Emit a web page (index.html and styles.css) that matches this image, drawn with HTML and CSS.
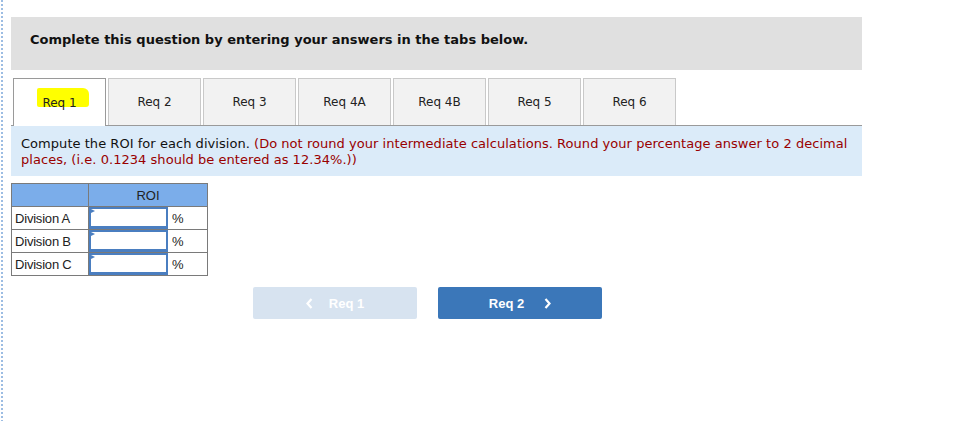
FILE: index.html
```html
<!DOCTYPE html>
<html>
<head>
<meta charset="utf-8">
<link rel="stylesheet" href="styles.css">
</head>
<body>
<div class="page">
  <div class="rail"></div>
  <div class="main">
    <div class="header">Complete this question by entering your answers in the tabs below.</div>
    <div class="tabs">
      <div class="tab active"><span class="hl">Req 1</span></div>
      <div class="tab">Req 2</div>
      <div class="tab">Req 3</div>
      <div class="tab">Req 4A</div>
      <div class="tab">Req 4B</div>
      <div class="tab">Req 5</div>
      <div class="tab">Req 6</div>
    </div>
    <div class="instr">Compute the ROI for each division. <span class="red">(Do not round your intermediate calculations. Round your percentage answer to 2 decimal places, (i.e. 0.1234 should be entered as 12.34%.))</span></div>
    <table class="grid">
      <tr class="head"><th class="c1"></th><th colspan="2">ROI</th></tr>
      <tr><td class="c1">Division A</td><td class="inp"><div class="box"></div></td><td class="pct">%</td></tr>
      <tr><td class="c1">Division B</td><td class="inp"><div class="box"></div></td><td class="pct">%</td></tr>
      <tr><td class="c1">Division C</td><td class="inp"><div class="box"></div></td><td class="pct">%</td></tr>
    </table>
    <div class="nav">
      <div class="btn prev"><svg class="chev" width="7" height="11" viewBox="0 0 7 11"><path d="M5.5 1 L1.5 5.5 L5.5 10" fill="none" stroke="#fff" stroke-width="2.2"/></svg><span>Req 1</span></div>
      <div class="btn next"><span>Req 2</span><svg class="chev" width="7" height="11" viewBox="0 0 7 11"><path d="M1.5 1 L5.5 5.5 L1.5 10" fill="none" stroke="#fff" stroke-width="2.2"/></svg></div>
    </div>
  </div>
</div>
</body>
</html>
```
FILE: styles.css
```css
html, body { margin: 0; padding: 0; background: #fff; }
.page { display: flex; height: 421px; overflow: hidden; }
.rail {
  width: 2px; margin-left: 1px; height: 421px; flex: none;
  background: repeating-linear-gradient(to bottom, #9dbde3 0, #9dbde3 2px, transparent 2px, transparent 4px);
}
.main { margin-left: 8px; width: 851px; }
.header {
  margin-top: 17px; height: 53px; box-sizing: border-box;
  background: #e0e0e0; padding: 15px 0 0 19px;
  font: bold 13px/16px "DejaVu Sans", Verdana, sans-serif; color: #111;
}
.tabs {
  margin-top: 8px; display: flex; gap: 2px; padding-left: 2px;
  border-bottom: 1px solid #9a9a9a; height: 47px;
}
.tab {
  width: 93px; height: 47px; box-sizing: border-box;
  background: #f2f2f2; border: 1px solid #c9c9c9; border-bottom: none;
  display: flex; align-items: center; justify-content: center;
  font: 12px "DejaVu Sans", Verdana, sans-serif; color: #222;
}
.tab.active {
  background: #fff; border-color: #9a9a9a; height: 48px; margin-bottom: -1px;
  position: relative; isolation: isolate;
}
.hl { position: relative; }
.hl::before {
  content: ""; position: absolute; left: -5px; right: -12px; top: -8px; bottom: 3px;
  background: #ffff00; z-index: -1; border-radius: 2px 6px 3px 2px;
}
.instr {
  background: #dbebf9; padding: 10px 10px 8px 10px; height: 50px; box-sizing: border-box;
  font: 13px/16px "DejaVu Sans", Verdana, sans-serif; color: #111; letter-spacing: 0.04px;
}
.red { color: #990000; }
.grid {
  margin-top: 7px; border-collapse: collapse;
  font: 13px "Liberation Sans", Arial, sans-serif; color: #222;
}
.grid td, .grid th { border: 1px solid #7a7a7a; height: 22px; padding: 0; }
.grid tr.head th { background: #7badea; font-weight: normal; text-align: center; color: #222; }
.grid .c1 { width: 73px; padding-left: 3px; letter-spacing: -0.2px; }
.grid .inp { width: 78px; position: relative; }
.grid .pct { width: 35px; padding-left: 4px; }
.box {
  position: absolute; left: 0; top: 0; right: -1px; bottom: 0;
  border: 2px solid #4a7ec0; border-bottom-width: 3px;
}
.box::before {
  content: ""; position: absolute; left: 0; top: 0;
  border-left: 4px solid #4a7ec0; border-top: 2.5px solid transparent; border-bottom: 2.5px solid transparent;
}
.nav { display: flex; gap: 21px; margin-top: 11px; padding-left: 242px; }
.btn {
  width: 164px; height: 32px; border-radius: 2px;
  display: flex; align-items: center; justify-content: center;
  font: bold 13px "Liberation Sans", Arial, sans-serif; color: #fff;
}
.btn.prev { background: #d7e3f0; gap: 16px; }
.btn.next { background: #3b77b9; gap: 20px; }
.chev { display: block; }
```
